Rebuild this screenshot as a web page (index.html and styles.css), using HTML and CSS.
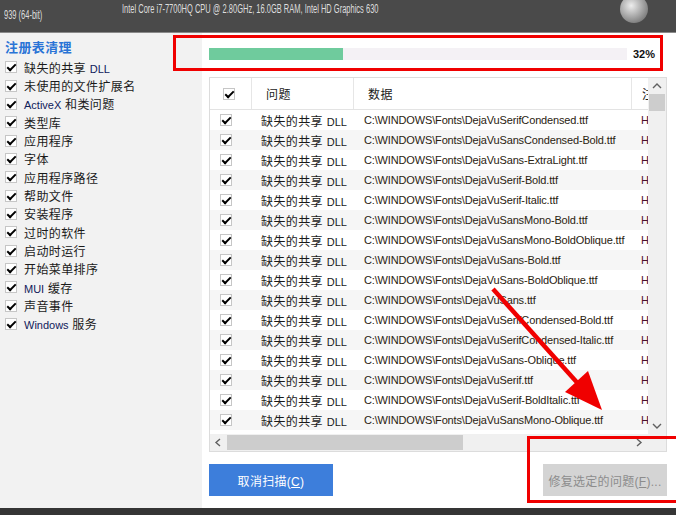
FILE: index.html
```html
<!DOCTYPE html>
<html lang="zh-CN">
<head>
    <meta charset="UTF-8">
    <title>注册表清理</title>
    <link rel="stylesheet" href="styles.css">
</head>
<body>
    <div class="topbar">
        <span class="ver"><span class="narrow">939 (64-bit)</span></span>
        <span class="sysinfo"><span class="narrow">Intel Core i7-7700HQ CPU @ 2.80GHz, 16.0GB RAM, Intel HD Graphics 630</span></span>
        <span class="orb"></span>
    </div>

    <div class="app">
        <aside class="sidebar">
            <h2>注册表清理</h2>
            <ul class="cats">
                <li><span class="cb"></span><span class="label">缺失的共享 <span class="en">DLL</span></span></li>
                <li><span class="cb"></span><span class="label">未使用的文件扩展名</span></li>
                <li><span class="cb"></span><span class="label"><span class="en">ActiveX</span> 和类问题</span></li>
                <li><span class="cb"></span><span class="label">类型库</span></li>
                <li><span class="cb"></span><span class="label">应用程序</span></li>
                <li><span class="cb"></span><span class="label">字体</span></li>
                <li><span class="cb"></span><span class="label">应用程序路径</span></li>
                <li><span class="cb"></span><span class="label">帮助文件</span></li>
                <li><span class="cb"></span><span class="label">安装程序</span></li>
                <li><span class="cb"></span><span class="label">过时的软件</span></li>
                <li><span class="cb"></span><span class="label">启动时运行</span></li>
                <li><span class="cb"></span><span class="label">开始菜单排序</span></li>
                <li><span class="cb"></span><span class="label"><span class="en">MUI</span> 缓存</span></li>
                <li><span class="cb"></span><span class="label">声音事件</span></li>
                <li><span class="cb"></span><span class="label"><span class="en">Windows</span> 服务</span></li>
            </ul>
        </aside>

        <main class="main">
            <div class="progress">
                <div class="track"><div class="fill" style="width: 32%"></div></div>
                <span class="pct">32%</span>
            </div>

            <div class="results">
                <div class="results-body">
                    <div class="table">
                        <div class="row head">
                            <div class="c-check"><span class="cb"></span></div>
                            <div class="c-issue">问题</div>
                            <div class="c-data">数据</div>
                            <div class="c-key">注册表项</div>
                        </div>
                        <div class="row"><div class="c-check"><span class="cb"></span></div><div class="c-issue">缺失的共享 <span class="en">DLL</span></div><div class="c-data">C:\WINDOWS\Fonts\DejaVuSerifCondensed.ttf</div><div class="c-key">HKLM\SOFTWARE</div></div>
                        <div class="row"><div class="c-check"><span class="cb"></span></div><div class="c-issue">缺失的共享 <span class="en">DLL</span></div><div class="c-data">C:\WINDOWS\Fonts\DejaVuSansCondensed-Bold.ttf</div><div class="c-key">HKLM\SOFTWARE</div></div>
                        <div class="row"><div class="c-check"><span class="cb"></span></div><div class="c-issue">缺失的共享 <span class="en">DLL</span></div><div class="c-data">C:\WINDOWS\Fonts\DejaVuSans-ExtraLight.ttf</div><div class="c-key">HKLM\SOFTWARE</div></div>
                        <div class="row"><div class="c-check"><span class="cb"></span></div><div class="c-issue">缺失的共享 <span class="en">DLL</span></div><div class="c-data">C:\WINDOWS\Fonts\DejaVuSerif-Bold.ttf</div><div class="c-key">HKLM\SOFTWARE</div></div>
                        <div class="row"><div class="c-check"><span class="cb"></span></div><div class="c-issue">缺失的共享 <span class="en">DLL</span></div><div class="c-data">C:\WINDOWS\Fonts\DejaVuSerif-Italic.ttf</div><div class="c-key">HKLM\SOFTWARE</div></div>
                        <div class="row"><div class="c-check"><span class="cb"></span></div><div class="c-issue">缺失的共享 <span class="en">DLL</span></div><div class="c-data">C:\WINDOWS\Fonts\DejaVuSansMono-Bold.ttf</div><div class="c-key">HKLM\SOFTWARE</div></div>
                        <div class="row"><div class="c-check"><span class="cb"></span></div><div class="c-issue">缺失的共享 <span class="en">DLL</span></div><div class="c-data">C:\WINDOWS\Fonts\DejaVuSansMono-BoldOblique.ttf</div><div class="c-key">HKLM\SOFTWARE</div></div>
                        <div class="row"><div class="c-check"><span class="cb"></span></div><div class="c-issue">缺失的共享 <span class="en">DLL</span></div><div class="c-data">C:\WINDOWS\Fonts\DejaVuSans-Bold.ttf</div><div class="c-key">HKLM\SOFTWARE</div></div>
                        <div class="row"><div class="c-check"><span class="cb"></span></div><div class="c-issue">缺失的共享 <span class="en">DLL</span></div><div class="c-data">C:\WINDOWS\Fonts\DejaVuSans-BoldOblique.ttf</div><div class="c-key">HKLM\SOFTWARE</div></div>
                        <div class="row"><div class="c-check"><span class="cb"></span></div><div class="c-issue">缺失的共享 <span class="en">DLL</span></div><div class="c-data">C:\WINDOWS\Fonts\DejaVuSans.ttf</div><div class="c-key">HKLM\SOFTWARE</div></div>
                        <div class="row"><div class="c-check"><span class="cb"></span></div><div class="c-issue">缺失的共享 <span class="en">DLL</span></div><div class="c-data">C:\WINDOWS\Fonts\DejaVuSerifCondensed-Bold.ttf</div><div class="c-key">HKLM\SOFTWARE</div></div>
                        <div class="row"><div class="c-check"><span class="cb"></span></div><div class="c-issue">缺失的共享 <span class="en">DLL</span></div><div class="c-data">C:\WINDOWS\Fonts\DejaVuSerifCondensed-Italic.ttf</div><div class="c-key">HKLM\SOFTWARE</div></div>
                        <div class="row"><div class="c-check"><span class="cb"></span></div><div class="c-issue">缺失的共享 <span class="en">DLL</span></div><div class="c-data">C:\WINDOWS\Fonts\DejaVuSans-Oblique.ttf</div><div class="c-key">HKLM\SOFTWARE</div></div>
                        <div class="row"><div class="c-check"><span class="cb"></span></div><div class="c-issue">缺失的共享 <span class="en">DLL</span></div><div class="c-data">C:\WINDOWS\Fonts\DejaVuSerif.ttf</div><div class="c-key">HKLM\SOFTWARE</div></div>
                        <div class="row"><div class="c-check"><span class="cb"></span></div><div class="c-issue">缺失的共享 <span class="en">DLL</span></div><div class="c-data">C:\WINDOWS\Fonts\DejaVuSerif-BoldItalic.ttf</div><div class="c-key">HKLM\SOFTWARE</div></div>
                        <div class="row"><div class="c-check"><span class="cb"></span></div><div class="c-issue">缺失的共享 <span class="en">DLL</span></div><div class="c-data">C:\WINDOWS\Fonts\DejaVuSansMono-Oblique.ttf</div><div class="c-key">HKLM\SOFTWARE</div></div>
                        <div class="row"><div class="c-check"><span class="cb"></span></div><div class="c-issue">缺失的共享 <span class="en">DLL</span></div><div class="c-data">C:\WINDOWS\Fonts\DejaVuSansCondensed-Oblique.ttf</div><div class="c-key">HKLM\SOFTWARE</div></div>
                    </div>
                    <div class="vscroll">
                        <svg class="chev" width="18" height="16" viewBox="0 0 18 16"><polyline points="5,10 9,6 13,10" fill="none" stroke="#606060" stroke-width="1.4"/></svg>
                        <div class="vthumb"></div>
                        <div class="vspace"></div>
                        <svg class="chev" width="18" height="16" viewBox="0 0 18 16"><polyline points="5,6 9,10 13,6" fill="none" stroke="#606060" stroke-width="1.4"/></svg>
                    </div>
                </div>
                <div class="hscroll">
                    <svg class="chev" width="17" height="17" viewBox="0 0 17 17"><polyline points="10,5 6,8.5 10,12" fill="none" stroke="#606060" stroke-width="1.4"/></svg>
                    <div class="hthumb"></div>
                    <div class="hspace"></div>
                    <svg class="chev" width="17" height="17" viewBox="0 0 17 17"><polyline points="7,5 11,8.5 7,12" fill="none" stroke="#606060" stroke-width="1.4"/></svg>
                    <div class="corner"></div>
                </div>
            </div>

            <div class="actions">
                <button class="btn btn-primary">取消扫描(<u>C</u>)</button>
                <button class="btn btn-disabled">修复选定的问题(<u>F</u>)...</button>
            </div>
        </main>
    </div>

    <div class="footbar"></div>

    <!-- annotations drawn over the screenshot -->
    <div class="mark mark-progress"></div>
    <div class="mark mark-fix"></div>
    <svg class="arrow" width="676" height="515" viewBox="0 0 676 515">
        <line x1="493" y1="289" x2="582" y2="388" stroke="#f00000" stroke-width="4.5"/>
        <polygon points="602,410 565,392 588,371" fill="#f00000"/>
    </svg>
</body>
</html>
```

FILE: styles.css
```css
* {
    margin: 0;
    padding: 0;
    box-sizing: border-box;
}

body {
    width: 676px;
    height: 515px;
    overflow: hidden;
    position: relative;
    background: #ffffff;
    font-family: "Liberation Sans", "Noto Sans CJK SC", sans-serif;
    font-size: 12px;
    color: #1a1a1a;
}

.en {
    font-size: 11px;
}

/* top bar */
.topbar {
    height: 33px;
    background: #4a4a4a;
    border-bottom: 1px solid #8a8a8a;
    display: flex;
    align-items: flex-start;
    color: #dedede;
    font-size: 12.5px;
    white-space: nowrap;
}

.narrow {
    display: inline-block;
    transform: scaleX(0.6);
    transform-origin: left center;
}

.ver {
    padding: 8px 0 0 4px;
    width: 122px;
    flex-shrink: 0;
}

.sysinfo {
    padding-top: 2px;
    width: 250px;
    flex-shrink: 0;
}

.orb {
    width: 28px;
    height: 28px;
    border-radius: 50%;
    margin: -5px 28px 0 auto;
    flex-shrink: 0;
    background: radial-gradient(circle at 40% 38%, #ededed 0%, #b9b9b9 35%, #858585 70%, #5c5c5c 100%);
}

.app {
    display: flex;
    height: 475px;
}

/* sidebar */
.sidebar {
    width: 202px;
    flex-shrink: 0;
    background: #f2f2f2;
    padding: 6px 0 0 5px;
}

.sidebar h2 {
    font-size: 13px;
    font-weight: bold;
    color: #2a74d6;
    letter-spacing: 0.4px;
    height: 18px;
    line-height: 18px;
    margin-bottom: 1px;
}

.cats {
    list-style: none;
}

.cats li {
    height: 18.35px;
    display: flex;
    align-items: center;
    letter-spacing: 0.4px;
    white-space: nowrap;
}

.cats li .en {
    letter-spacing: 0;
    color: #10205a;
}

.cats .cb {
    margin-right: 7px;
}

/* checkbox */
.cb {
    display: inline-block;
    width: 12px;
    height: 12px;
    border: 1px solid #c6c6c6;
    background: #ffffff;
    position: relative;
    flex-shrink: 0;
}

.cb::after {
    content: "";
    position: absolute;
    left: 3px;
    top: 0;
    width: 3px;
    height: 7px;
    border: solid #000000;
    border-width: 0 2.5px 2.5px 0;
    transform: rotate(45deg);
}

/* main area */
.main {
    flex: 1;
    min-width: 0;
    padding: 0 9px 0 7px;
    display: flex;
    flex-direction: column;
}

.progress {
    margin-top: 15px;
    height: 12px;
    display: flex;
    align-items: center;
}

.track {
    width: 418px;
    height: 12px;
    background: #f4f1f5;
}

.fill {
    height: 100%;
    background: #6fcb9d;
}

.pct {
    margin-left: 6px;
    font-size: 11px;
    font-weight: bold;
    color: #111;
}

.results {
    margin-top: 17px;
    height: 375px;
    border: 1px solid #dcdcdc;
    display: flex;
    flex-direction: column;
}

.results-body {
    flex: 1;
    min-height: 0;
    display: flex;
    overflow: hidden;
}

.table {
    flex: 1;
    min-width: 0;
    overflow: hidden;
}

.row {
    display: grid;
    grid-template-columns: 42px 102px 278px 200px;
    height: 20px;
    align-items: center;
    white-space: nowrap;
}

.row:nth-child(odd) {
    background: #f6f6f6;
}

.row.head {
    height: 32px;
    background: #ffffff;
    border-bottom: 1px solid #e3e3e3;
    align-items: stretch;
}

.row.head > div {
    border-right: 1px solid #e6e6e6;
    display: flex;
    align-items: center;
    padding-left: 14px;
    letter-spacing: 0.5px;
    font-size: 12px;
    color: #1a1a1a;
}

.row.head .c-check {
    padding-left: 13px;
}

.row.head .c-key {
    padding-left: 10px;
    border-right: none;
}

.c-check {
    padding-left: 10px;
    display: flex;
    align-items: center;
}

.c-issue {
    padding-left: 9px;
    letter-spacing: 0.4px;
}

.c-issue .en {
    letter-spacing: 0;
}

.c-data {
    padding-left: 10px;
    font-size: 11px;
    letter-spacing: -0.15px;
    color: #2a2210;
}

.c-key {
    padding-left: 9px;
    font-size: 11px;
    color: #4c0f2c;
    overflow: hidden;
}

/* scrollbars */
.vscroll {
    width: 18px;
    flex-shrink: 0;
    background: #f0f0f0;
    display: flex;
    flex-direction: column;
}

.vthumb {
    height: 17px;
    background: #cdcdcd;
    margin: 0 1px;
}

.vspace {
    flex: 1;
}

.chev {
    display: block;
    flex-shrink: 0;
}

.hscroll {
    height: 17px;
    flex-shrink: 0;
    background: #f0f0f0;
    display: flex;
}

.hthumb {
    width: 236px;
    background: #cdcdcd;
    margin: 1px 0;
}

.hspace {
    flex: 1;
}

.corner {
    width: 19px;
    flex-shrink: 0;
    background: #f0f0f0;
}

/* buttons */
.actions {
    margin-top: 12px;
    display: flex;
    justify-content: space-between;
}

.btn {
    width: 124px;
    height: 32px;
    border: none;
    font-family: "Liberation Sans", "Noto Sans CJK SC", sans-serif;
    font-size: 12px;
    letter-spacing: 0.3px;
}

.btn-primary {
    background: #3d7edb;
    color: #ffffff;
}

.btn-disabled {
    background: #d4d4d4;
    color: #8c8c8c;
}

.footbar {
    height: 7px;
    background: #353535;
}

/* red annotations */
.mark {
    position: absolute;
    border: 3px solid #f00000;
}

.mark-progress {
    left: 173px;
    top: 35px;
    width: 490px;
    height: 36px;
}

.mark-fix {
    left: 527px;
    top: 436px;
    width: 160px;
    height: 67px;
}

.arrow {
    position: absolute;
    left: 0;
    top: 0;
    pointer-events: none;
}
```
